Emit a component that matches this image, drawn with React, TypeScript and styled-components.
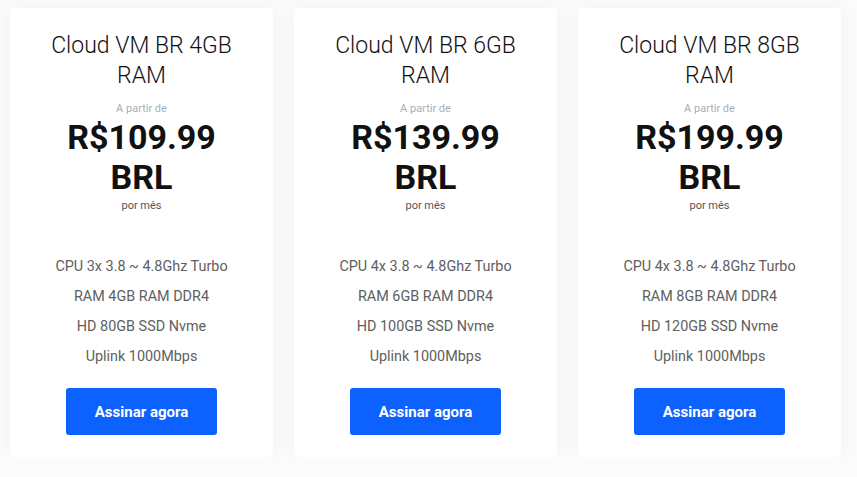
import React from "react";
import styled, { createGlobalStyle } from "styled-components";

const Global = createGlobalStyle`
  html, body { margin: 0; padding: 0; background: #fbfbfb; }
  body { font-family: Roboto, "Liberation Sans", sans-serif; }
`;

const Grid = styled.div`
  display: grid;
  grid-template-columns: repeat(3, 263px);
  column-gap: 21px;
  padding: 8px 0 0 10px;
`;

const Card = styled.div`
  background: #fff;
  border-radius: 4px;
  box-shadow: 0 0 22px rgba(0, 0, 0, 0.045);
  padding: 22px 16px 22px;
  display: flex;
  flex-direction: column;
  align-items: center;
  text-align: center;
  height: 449px;
  box-sizing: border-box;
`;

const Title = styled.h3`
  margin: 1px 0 0;
  font-family: "Roboto Light", Roboto, "Liberation Sans", sans-serif;
  font-weight: 300;
  font-size: 23px;
  line-height: 30px;
  color: #111;
  padding: 0 20px;
`;

const From = styled.div`
  margin-top: 10px;
  font-size: 11px;
  line-height: 16px;
  color: #a9afb7;
`;

const Price = styled.div`
  margin-top: 0;
  font-weight: 700;
  font-size: 34px;
  line-height: 40px;
  color: #111;
  padding: 0 20px;
`;

const Period = styled.div`
  margin-top: 1px;
  font-size: 11px;
  line-height: 16px;
  color: #555;
`;

const Features = styled.ul`
  list-style: none;
  margin: 38px 0 0;
  padding: 0;
`;

const Feature = styled.li`
  font-size: 14.4px;
  line-height: 30px;
  color: #606060;
`;

const Button = styled.button`
  margin-top: 16px;
  width: 151px;
  height: 47px;
  border: none;
  border-radius: 3px;
  background: #0d61ff;
  color: #fff;
  font-family: Roboto, "Liberation Sans", sans-serif;
  font-weight: 700;
  font-size: 15px;
  cursor: pointer;
`;

const plans = [
  { name: "Cloud VM BR 4GB RAM", price: "R$109.99 BRL", cpu: "3x", ram: "4GB", hd: "80GB" },
  { name: "Cloud VM BR 6GB RAM", price: "R$139.99 BRL", cpu: "4x", ram: "6GB", hd: "100GB" },
  { name: "Cloud VM BR 8GB RAM", price: "R$199.99 BRL", cpu: "4x", ram: "8GB", hd: "120GB" },
];

export default function App() {
  return (
    <>
      <Global />
      <Grid>
        {plans.map((p) => (
          <Card key={p.name}>
            <Title>{p.name}</Title>
            <From>A partir de</From>
            <Price>{p.price}</Price>
            <Period>por mês</Period>
            <Features>
              <Feature>CPU {p.cpu} 3.8 ~ 4.8Ghz Turbo</Feature>
              <Feature>RAM {p.ram} RAM DDR4</Feature>
              <Feature>HD {p.hd} SSD Nvme</Feature>
              <Feature>Uplink 1000Mbps</Feature>
            </Features>
            <Button>Assinar agora</Button>
          </Card>
        ))}
      </Grid>
    </>
  );
}
